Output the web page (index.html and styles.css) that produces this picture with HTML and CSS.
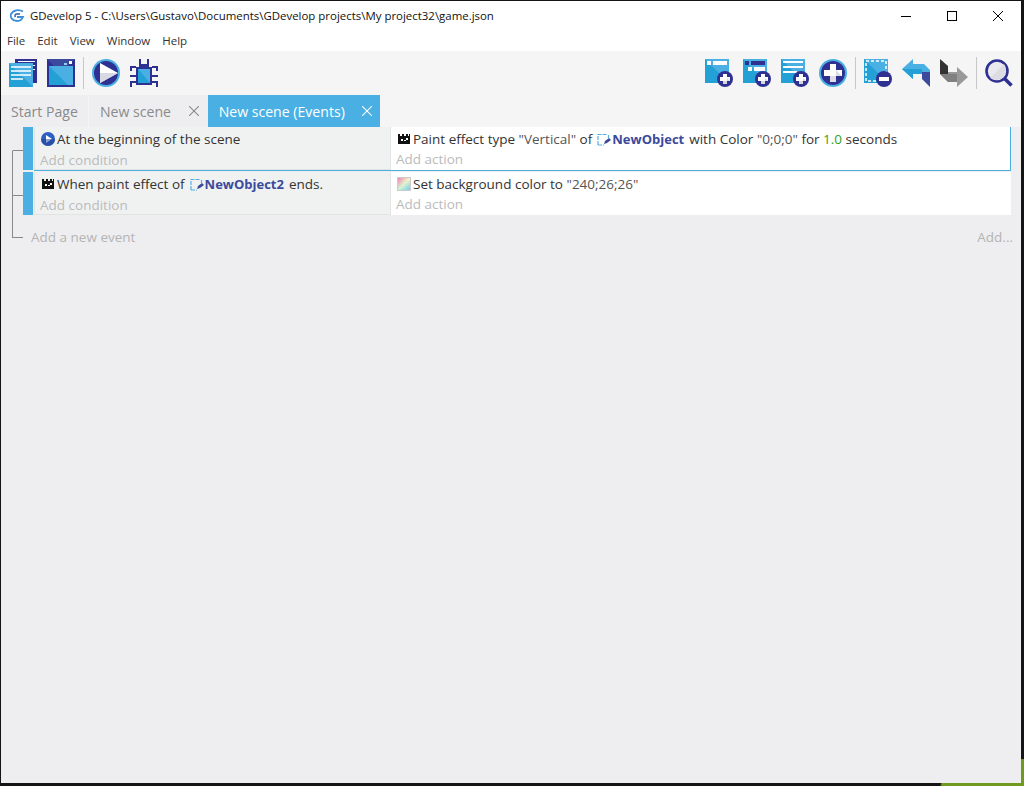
FILE: index.html
```html
<!DOCTYPE html>
<html lang="en">
<head>
    <meta charset="UTF-8">
    <title>GDevelop 5</title>
    <link rel="stylesheet" href="styles.css">
</head>
<body>
    <svg class="sprites" width="0" height="0">
        <symbol id="badge-plus" viewBox="0 0 16 16">
            <circle cx="8" cy="8" r="8" fill="#2e3192"/>
            <path d="M6 3h4v3h3v4h-3v3H6v-3H3V6h3z" fill="#fff"/>
            <path d="M6 13h4v-3h3l-3-3v3H6z" fill="#d5d6de"/>
        </symbol>
        <symbol id="panel" viewBox="0 0 24 24">
            <rect width="24" height="24" fill="#4ab0e4"/>
            <path d="M0 0l24 24H0z" fill="#23a0d5"/>
        </symbol>
        <symbol id="clap" viewBox="0 0 14 14">
            <path d="M1 4h12v8H1z" fill="#111"/>
            <path d="M1 2h2v2H1zM5 2h2v2H5zM9 2h2v2H9zM12 2h1v2h-1z" fill="#111"/>
            <path d="M9 6h2v2H9zM7 8h2v1H7zM4 7h2v2H4z" fill="#fff"/>
        </symbol>
        <symbol id="object" viewBox="0 0 14 14">
            <path d="M1 13V2.500h8.500M1 13h6M11.500 3v3" fill="none" stroke="#55aee4" stroke-width="1.200" stroke-dasharray="4 1"/>
            <path d="M7 12l1-3 4-3 2 2-4 3z" fill="#3b4a9c"/>
        </symbol>
        <symbol id="close" viewBox="0 0 10 10">
            <path d="M0 0l10 10M10 0L0 10" stroke="currentColor" stroke-width="1.100"/>
        </symbol>
    </svg>

    <div class="window">
        <div class="title-bar">
            <svg class="app-icon" width="16" height="14" viewBox="0 0 16 14">
                <path d="M14 2.500C10 0 4 1 2 5c-1 3 1 7 6 7 3 0 5-1.500 6-4H8" fill="none" stroke="#3f8fd8" stroke-width="1.800"/>
                <path d="M11 5H7.500C6 5 5.500 7 6.500 8" fill="none" stroke="#2e5fae" stroke-width="1.500"/>
            </svg>
            <span class="title-text">GDevelop 5 - C:\Users\Gustavo\Documents\GDevelop projects\My project32\game.json</span>
            <div class="win-controls">
                <button class="win-btn"><svg width="10" height="10" viewBox="0 0 10 10"><path d="M0 5.500h10" stroke="#000"/></svg></button>
                <button class="win-btn"><svg width="10" height="10" viewBox="0 0 10 10"><rect x=".5" y=".5" width="9" height="9" fill="none" stroke="#000"/></svg></button>
                <button class="win-btn"><svg width="10" height="10" viewBox="0 0 10 10"><path d="M0 0l10 10M10 0L0 10" stroke="#000"/></svg></button>
            </div>
        </div>

        <div class="menu-bar">
            <span>File</span>
            <span>Edit</span>
            <span>View</span>
            <span>Window</span>
            <span>Help</span>
        </div>

        <div class="toolbar">
            <svg class="tool" viewBox="0 0 28 28">
                <rect x="6" width="22" height="24" fill="#2e3192"/>
                <path d="M9 2.500h17M9 6.500h17M9 10.500h17" stroke="#fff"/>
                <rect y="4" width="24" height="24" fill="#4ab0e4"/>
                <path d="M0 4l24 24H0z" fill="#23a0d5"/>
                <path d="M2 8h20M2 12h20M2 16h20M2 20h12" stroke="#fff" stroke-width="1.500"/>
            </svg>
            <svg class="tool" viewBox="0 0 28 28">
                <rect width="28" height="28" fill="#2e3192"/>
                <rect x="2" y="7" width="24" height="19" fill="#4ab0e4"/>
                <path d="M2 7l19 19H2z" fill="#23a0d5"/>
                <path d="M0 0h28L21 7H7z" fill="#3b4a9c"/>
                <path d="M22 2h3v3h-3z" fill="#fff"/>
                <path d="M17 4h3v2h-3z" fill="#8fd0f0"/>
            </svg>
            <i class="sep"></i>
            <svg class="tool" viewBox="0 0 28 28">
                <circle cx="14" cy="14" r="14" fill="#4ab0e4"/>
                <circle cx="14" cy="14" r="12" fill="#2e3192"/>
                <path d="M8 4l18 10-18 10z" fill="#fff"/>
                <path d="M8 24l18-10H8z" fill="#d8d9e2"/>
            </svg>
            <svg class="tool" viewBox="0 0 28 28">
                <path d="M9 0h2v5H9zM17 0h2v5h-2zM9 5h10v3H9zM0 7h6v2H2v3H0zM22 7h6v5h-2V9h-4zM0 16h6v2H0zM22 16h6v2h-6zM0 22h6v2H2v4H0zM22 22h6v6h-2v-4h-4z" fill="#2e3192"/>
                <rect x="6" y="8" width="16" height="18" fill="#2e3192"/>
                <rect x="8" y="10" width="12" height="14" fill="#4ab0e4"/>
                <path d="M8 10l12 14H8z" fill="#23a0d5"/>
            </svg>

            <div class="spacer"></div>

            <div class="tool add-tool">
                <svg class="panel-icon" viewBox="0 0 24 24">
                    <use href="#panel"/>
                    <path d="M2 2h4v4H2zM8 2h14v4H8z" fill="#fff"/>
                </svg>
                <svg class="badge"><use href="#badge-plus"/></svg>
            </div>
            <div class="tool add-tool">
                <svg class="panel-icon" viewBox="0 0 24 24">
                    <use href="#panel"/>
                    <path d="M2 2h4v4H2zM8 2h14v4H8z" fill="#2e3192"/>
                    <path d="M5 8h4v4H5zM11 8h11v4H11z" fill="#fff"/>
                </svg>
                <svg class="badge"><use href="#badge-plus"/></svg>
            </div>
            <div class="tool add-tool">
                <svg class="panel-icon" viewBox="0 0 24 24">
                    <use href="#panel"/>
                    <path d="M2 2h20v2H2zM2 7h20v2H2zM2 12h14v2H2z" fill="#fff"/>
                </svg>
                <svg class="badge"><use href="#badge-plus"/></svg>
            </div>
            <svg class="tool" viewBox="0 0 28 28">
                <circle cx="14" cy="14" r="14" fill="#4ab0e4"/>
                <circle cx="14" cy="14" r="12" fill="#2e3192"/>
                <path d="M11 5h6v6h6v6h-6v6h-6v-6H5v-6h6z" fill="#fff"/>
                <path d="M11 17h6v6h-6zM17 11l6 6h-6z" fill="#dcdde5"/>
            </svg>
            <i class="sep"></i>
            <div class="tool add-tool">
                <svg class="panel-icon" viewBox="0 0 24 24">
                    <use href="#panel"/>
                    <rect x="2" y="2" width="20" height="20" fill="none" stroke="#fff" stroke-width="1.500" stroke-dasharray="3 2"/>
                </svg>
                <svg class="badge" viewBox="0 0 16 16">
                    <circle cx="8" cy="8" r="8" fill="#2e3192"/>
                    <path d="M3 6h10v4H3z" fill="#fff"/>
                </svg>
            </div>
            <svg class="tool" viewBox="0 0 28 28">
                <path d="M0 10L11 0v5h11l6 6v2h-8v2h-9v5z" fill="#4ab0e4"/>
                <path d="M0 10l11 10v-5h9v-5z" fill="#23a0d5"/>
                <path d="M20 13h8v15l-8-8z" fill="#3b4a9c"/>
            </svg>
            <svg class="tool" viewBox="0 0 28 28">
                <path d="M0 0l8 7v8H0z" fill="#333"/>
                <path d="M0 15h8v-2h9V8l11 10-11 10v-5H8z" fill="#999"/>
                <path d="M0 15h17v-1l0 9H8z" fill="#808080"/>
            </svg>
            <i class="sep"></i>
            <svg class="tool" viewBox="0 0 28 28">
                <circle cx="12" cy="12" r="10.500" fill="#e9e9ee" stroke="#2e3192" stroke-width="2.600"/>
                <path d="M5 19L19 5a10 10 0 0 1-14 14z" fill="#dcdce2"/>
                <path d="M19.500 19.500l7 7" stroke="#2e3192" stroke-width="3.500"/>
            </svg>
        </div>

        <div class="tabs">
            <div class="tab">Start Page</div>
            <div class="tab closable">New scene <svg class="tab-x"><use href="#close"/></svg></div>
            <div class="tab closable active">New scene (Events) <svg class="tab-x"><use href="#close"/></svg></div>
        </div>

        <div class="events">
            <div class="event selected">
                <div class="gutter first"><i></i><i></i></div>
                <div class="event-bar"></div>
                <div class="event-body">
                    <div class="conditions">
                        <div class="line">
                            <svg class="ico" viewBox="0 0 14 14">
                                <circle cx="7" cy="7" r="7" fill="#2d5fc4"/>
                                <path d="M5 3l6 4-6 4z" fill="#fff"/>
                                <path d="M0 7a7 7 0 0 0 14 0z" fill="#1e3f90" opacity=".5"/>
                            </svg>
                            <span>At the beginning of the scene</span>
                        </div>
                        <div class="add">Add condition</div>
                    </div>
                    <div class="actions">
                        <div class="line">
                            <svg class="ico"><use href="#clap"/></svg>
                            <span>Paint effect type <span class="val">"Vertical"</span> of</span>
                            <svg class="ico obj"><use href="#object"/></svg>
                            <b>NewObject</b>
                            <span>with Color <span class="val">"0;0;0"</span> for <span class="num">1.0</span> seconds</span>
                        </div>
                        <div class="add">Add action</div>
                    </div>
                </div>
            </div>

            <div class="event">
                <div class="gutter"><i></i><i></i></div>
                <div class="event-bar"></div>
                <div class="event-body">
                    <div class="conditions">
                        <div class="line">
                            <svg class="ico"><use href="#clap"/></svg>
                            <span>When paint effect of</span>
                            <svg class="ico obj"><use href="#object"/></svg>
                            <b>NewObject2</b>
                            <span>ends.</span>
                        </div>
                        <div class="add">Add condition</div>
                    </div>
                    <div class="actions">
                        <div class="line">
                            <i class="ico swatch"></i>
                            <span>Set background color to <span class="val">"240;26;26"</span></span>
                        </div>
                        <div class="add">Add action</div>
                    </div>
                </div>
            </div>

            <div class="new-event">
                <div class="gutter last"><i></i></div>
                <span class="add-event">Add a new event</span>
                <span class="add-more">Add...</span>
            </div>
        </div>
    </div>
</body>
</html>
```

FILE: styles.css
```css
html, body {
    margin: 0;
    height: 100%;
}

body {
    font-family: "Open Sans", sans-serif;
    background: radial-gradient(ellipse 84px 27px at 1024px 786px, #6f9a1e 98%, transparent 100%), #141414;
    overflow: hidden;
}

.sprites {
    position: absolute;
}

.window {
    display: flex;
    flex-direction: column;
    height: calc(100vh - 4px);
    margin: 1px 3px 3px 1px;
    background: #eeeef0;
}

.title-bar {
    display: flex;
    align-items: center;
    height: 29px;
    flex: none;
    background: #fff;
    font-size: 11.450px;
    color: #111;
}

.app-icon {
    margin: 1px 5px 0 8px;
    flex: none;
}

.title-text {
    flex: 1;
}

.win-controls {
    display: flex;
    height: 29px;
}

.win-btn {
    width: 46px;
    padding: 0;
    border: none;
    background: none;
    display: flex;
    align-items: center;
    justify-content: center;
}

.menu-bar {
    display: flex;
    gap: 12px;
    align-items: center;
    height: 21px;
    flex: none;
    padding-left: 6px;
    background: #fff;
    font-size: 11.500px;
    color: #333;
}

.toolbar {
    display: flex;
    align-items: flex-start;
    gap: 10px;
    height: 36px;
    flex: none;
    padding: 8px 8px 0 8px;
    background: #f5f5f5;
}

.tool {
    width: 28px;
    height: 28px;
    flex: none;
}

.add-tool {
    position: relative;
}

.panel-icon {
    width: 24px;
    height: 24px;
    display: block;
}

.badge {
    position: absolute;
    left: 12px;
    top: 12px;
    width: 16px;
    height: 16px;
}

.sep {
    width: 1px;
    height: 32px;
    margin: -2px -2px 0;
    flex: none;
    background: #c8c8c8;
}

.spacer {
    flex: 1;
}

.tabs {
    display: flex;
    height: 32px;
    flex: none;
    background: #f5f5f5;
    font-size: 14.100px;
    color: #8a8a8a;
}

.tab {
    display: flex;
    align-items: center;
    padding: 0 10px 0 10px;
    margin-right: 1px;
    background: #eeeef0;
    white-space: pre;
}

.tab.closable {
    padding: 0 9px 0 11px;
    margin-right: 0;
}

.tab.active {
    background: #4ab0e4;
    color: #fff;
    padding-right: 8px;
}

.tab-x {
    width: 10px;
    height: 10px;
    margin-left: 14px;
}

.events {
    flex: 1;
    display: flex;
    flex-direction: column;
    font-size: 13.500px;
    color: #333;
}

.event {
    display: flex;
    align-items: flex-start;
    height: 45px;
    margin-right: 10px;
}

.gutter {
    width: 11px;
    height: 100%;
    margin-left: 11px;
    flex: none;
    display: flex;
    flex-direction: column;
}

.gutter i {
    display: block;
    border-left: 1px solid #888;
    flex: 1;
}

.gutter i:first-child {
    flex: none;
    height: 24px;
    border-bottom: 1px solid #888;
    box-sizing: border-box;
}

.gutter.first i:first-child {
    border-left-color: transparent;
}

.gutter.last i:first-child {
    height: 21px;
}

.event-bar {
    width: 10px;
    height: 43px;
    flex: none;
    background: #4ab0e4;
    margin-right: 1px;
}

.event-body {
    flex: 1;
    display: flex;
    height: 43px;
}

.selected .event-body {
    height: 44px;
    box-sizing: border-box;
    border-bottom: 1px solid #4ab0e4;
}

.conditions {
    width: 357px;
    flex: none;
    box-sizing: border-box;
    padding-left: 5px;
    background: #f0f2f2;
    border: 1px solid #e2e4e4;
    border-top: none;
}

.actions {
    flex: 1;
    padding-left: 5px;
    background: #fff;
}

.selected .actions {
    border-right: 1px solid #4ab0e4;
}

.line {
    display: flex;
    align-items: center;
    height: 24px;
    padding-left: 1px;
    white-space: pre;
}

.line > span {
    margin-right: 4px;
}

.ico {
    display: block;
    width: 14px;
    height: 14px;
    margin-right: 2px;
    flex: none;
}

.ico.obj {
    margin: 0 1px 0 1px;
}

.swatch {
    box-sizing: border-box;
    border: 1px solid #ccc;
    background: linear-gradient(135deg, rgba(250, 120, 180, .9), rgba(255, 255, 255, .6) 50%, rgba(110, 200, 250, .9)), linear-gradient(45deg, #70e890, #f8e070);
}

.line b {
    margin-right: 5px;
    font-size: 13px;
    color: #3b4a9c;
}

.val {
    color: #555;
}

.num {
    color: #33a020;
}

.add {
    color: #bbb;
    height: 18px;
    line-height: 16px;
}

.conditions .add {
    line-height: 18px;
}

.new-event {
    display: flex;
    height: 40px;
    line-height: 40px;
    color: #b4b4b4;
    padding-right: 8px;
}

.add-event {
    flex: 1;
    margin-left: 8px;
}
```
